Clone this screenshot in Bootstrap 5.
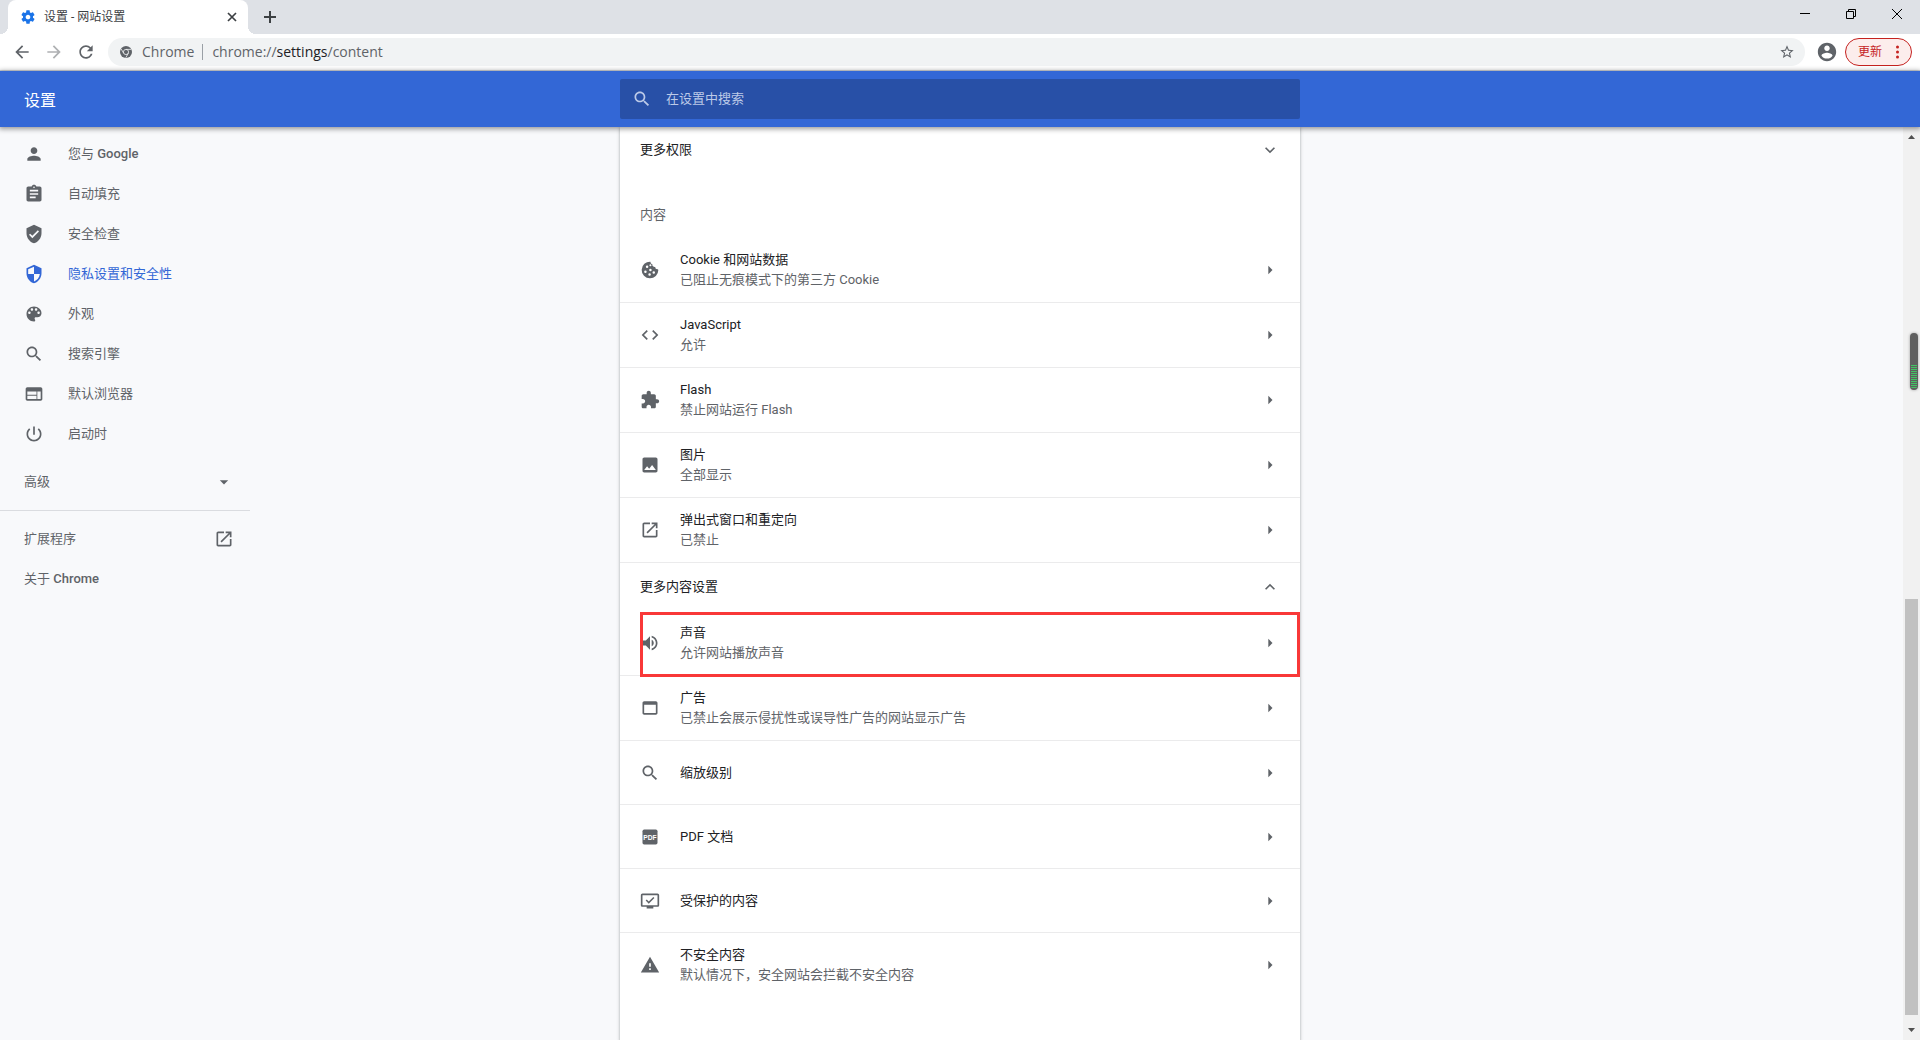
<!DOCTYPE html>
<html lang="zh-CN">
<head>
<meta charset="utf-8">
<meta name="viewport" content="width=device-width, initial-scale=1">
<title>设置 - 网站设置</title>
<link href="https://cdn.jsdelivr.net/npm/bootstrap@5.3.0/dist/css/bootstrap.min.css" rel="stylesheet">
<style>
body { font: 13px/20px Roboto, "Noto Sans CJK SC", sans-serif; color: #202124; background: #f8f9fb; }
button { background: none; border: 0; padding: 0; color: inherit; }
svg { display: block; fill: currentColor; flex: none; }
a { color: inherit; text-decoration: none; }
.ico { width: 20px; height: 20px; }
.ico-sm { width: 12px; height: 12px; }
.tint { color: #5f6368; }
/* browser frame */
.tabstrip { background: #dee1e6; height: 34px; padding-left: 8px; }
.tab-item { position: relative; width: 240px; height: 34px; padding: 0 10px 0 12px; background: #fff; border-radius: 8px 8px 0 0; font-size: 12px; color: #3c4043; }
.tab-item::before, .tab-item::after { content: ""; position: absolute; bottom: 0; width: 8px; height: 8px; }
.tab-item::before { right: 100%; background: radial-gradient(circle at 0 0, transparent 8px, #fff 8px); }
.tab-item::after { left: 100%; background: radial-gradient(circle at 100% 0, transparent 8px, #fff 8px); }
.win-btn { width: 46px; height: 28px; color: #000; }
.toolbar { height: 37px; padding: 0 8px 0 12px; background: #fff; border-bottom: 1px solid #d5d8dc; color: #5f6368; }
.nav-btns { gap: 12px; margin-right: 12px; }
.omnibox { height: 28px; background: #f1f3f4; padding: 0 10px 0 12px; font: 14px/20px "Open Sans", "Noto Sans", sans-serif; color: #5f6368; }
.origin { padding: 0 8px 0 10px; }
.omnibox .sep { width: 1px; height: 16px; background: #9aa0a6; }
.url { padding-left: 9px; }
.url b { font-weight: 400; color: #202124; }
.user-btn { margin: 0 7px 0 11px; }
.update { width: 67px; height: 28px; border: 1px solid #c5221f; background: #fcedec; color: #c5221f; font-size: 12px; padding: 0 12px; }
/* settings header */
.appbar { height: 56px; background: #3367d6; color: #fff; box-shadow: 0 1px 5px 1px rgba(0,0,0,.4); position: relative; z-index: 2; }
.side { flex: 1 1 0; }
.appbar h1 { font-size: 16px; line-height: 20px; font-weight: 400; }
.searchbox { flex: 0 1 680px; height: 40px; background: #2850a7; border-radius: 2px; padding: 0 12px; gap: 14px; color: #bccae8; }
.searchbox input { background: none; border: 0; outline: 0; color: #fff; padding: 0; }
.searchbox input::placeholder { color: #bccae8; opacity: 1; }
/* body */
.sidenav { width: 250px; padding-top: 7px; color: #5f6368; }
.sidenav a, .sidenav button { height: 40px; padding: 0 16px 0 24px; }
.sidenav b { font-weight: 500; }
.sidenav a.active { color: #3367d6; }
.sidenav hr { margin: 8px 0; border-color: #dadce0; opacity: 1; }
.panel { flex: 0 1 680px; background: #fff; box-shadow: 0 1px 2px 0 rgba(60,64,67,.3), 0 1px 3px 1px rgba(60,64,67,.15); z-index: 1; }
.fold { height: 48px; padding: 0 20px; }
.fold.first { height: 45px; }
.panel h2 { font-size: 13px; line-height: 20px; font-weight: 400; margin: 0; padding: 33px 20px 13px; color: #5f6368; }
.setting { position: relative; min-height: 64px; padding: 11px 20px; gap: 20px; border-bottom: 1px solid #ebebec; }
.setting:last-child { border: 0; }
.setting.two { min-height: 65px; }
.highlight { position: absolute; left: 20px; right: 0; top: 1px; bottom: -2px; border: 3px solid #f93838; z-index: 1; }
/* scrollbar */
.scroll { width: 17px; background: #f1f1f1; color: #505050; padding: 5px 2px; }
.thumb { width: 13px; background: #c1c1c1; }
.gauge { position: absolute; right: 2px; top: 206px; width: 8px; height: 57px; border-radius: 4px; padding: 32px 1px 1px; background: #5f5f5f; box-shadow: 0 0 3px rgba(0,0,0,.35); z-index: 3; }
.gauge div { height: 100%; border-radius: 0 0 3px 3px; background: repeating-linear-gradient(#42c463 0 1px, #5f5f5f 1px 2px); }
</style>
<script src="https://cdn.jsdelivr.net/npm/bootstrap@5.3.0/dist/js/bootstrap.bundle.min.js"></script>
</head>
<body class="d-flex flex-column vh-100 overflow-hidden">
<svg class="d-none">
  <symbol id="gear" viewBox="0 0 24 24"><path d="M19.43 12.98c.04-.32.07-.64.07-.98s-.03-.66-.07-.98l2.11-1.65c.19-.15.24-.42.12-.64l-2-3.46c-.12-.22-.39-.3-.61-.22l-2.49 1c-.52-.4-1.08-.73-1.69-.98l-.38-2.65C14.46 2.18 14.25 2 14 2h-4c-.25 0-.46.18-.49.42l-.38 2.65c-.61.25-1.17.59-1.69.98l-2.49-1c-.23-.09-.49 0-.61.22l-2 3.46c-.13.22-.07.49.12.64l2.11 1.65c-.04.32-.07.65-.07.98s.03.66.07.98l-2.11 1.65c-.19.15-.24.42-.12.64l2 3.46c.12.22.39.3.61.22l2.49-1c.52.4 1.08.73 1.69.98l.38 2.65c.03.24.24.42.49.42h4c.25 0 .46-.18.49-.42l.38-2.65c.61-.25 1.17-.59 1.69-.98l2.49 1c.23.09.49 0 .61-.22l2-3.46c.12-.22.07-.49-.12-.64l-2.11-1.65zM12 15.5c-1.93 0-3.5-1.57-3.5-3.5s1.57-3.5 3.5-3.5 3.5 1.57 3.5 3.5-1.57 3.5-3.5 3.5z"/></symbol>
  <symbol id="back" viewBox="0 0 24 24"><path d="M20 11H7.83l5.59-5.59L12 4l-8 8 8 8 1.41-1.41L7.83 13H20v-2z"/></symbol>
  <symbol id="forward" viewBox="0 0 24 24"><path d="M12 4l-1.41 1.41L16.17 11H4v2h12.17l-5.58 5.59L12 20l8-8z"/></symbol>
  <symbol id="reload" viewBox="0 0 24 24"><path d="M17.65 6.35C16.2 4.9 14.21 4 12 4c-4.42 0-7.99 3.58-7.99 8s3.57 8 7.99 8c3.73 0 6.84-2.55 7.73-6h-2.08c-.82 2.33-3.04 4-5.65 4-3.31 0-6-2.69-6-6s2.69-6 6-6c1.66 0 3.14.69 4.22 1.78L13 11h7V4l-2.35 2.35z"/></symbol>
  <symbol id="star" viewBox="0 0 24 24"><path d="M22 9.24l-7.19-.62L12 2 9.19 8.63 2 9.24l5.46 4.73L5.82 21 12 17.27 18.18 21l-1.63-7.03L22 9.24zM12 15.4l-3.76 2.27 1-4.28-3.32-2.88 4.38-.38L12 6.1l1.71 4.04 4.38.38-3.32 2.88 1 4.28L12 15.4z"/></symbol>
  <symbol id="account" viewBox="0 0 24 24"><path d="M12 2C6.48 2 2 6.48 2 12s4.48 10 10 10 10-4.48 10-10S17.52 2 12 2zm0 3c1.66 0 3 1.34 3 3s-1.34 3-3 3-3-1.34-3-3 1.34-3 3-3zm0 14.2c-2.5 0-4.71-1.28-6-3.22.03-1.99 4-3.08 6-3.08 1.99 0 5.97 1.09 6 3.08-1.29 1.94-3.5 3.22-6 3.22z"/></symbol>
  <symbol id="search" viewBox="0 0 24 24"><path d="M15.5 14h-.79l-.28-.27C15.41 12.59 16 11.11 16 9.5 16 5.91 13.09 3 9.5 3S3 5.91 3 9.5 5.91 16 9.5 16c1.61 0 3.09-.59 4.23-1.57l.27.28v.79l5 4.99L20.49 19l-4.99-5zm-6 0C7.01 14 5 11.99 5 9.5S7.01 5 9.5 5 14 7.01 14 9.5 11.99 14 9.5 14z"/></symbol>
  <symbol id="person" viewBox="0 0 24 24"><path d="M12 12c2.21 0 4-1.79 4-4s-1.79-4-4-4-4 1.79-4 4 1.79 4 4 4zm0 2c-2.67 0-8 1.34-8 4v2h16v-2c0-2.66-5.33-4-8-4z"/></symbol>
  <symbol id="assignment" viewBox="0 0 24 24"><path d="M19 3h-4.18C14.4 1.84 13.3 1 12 1c-1.3 0-2.4.84-2.82 2H5c-1.1 0-2 .9-2 2v14c0 1.1.9 2 2 2h14c1.1 0 2-.9 2-2V5c0-1.1-.9-2-2-2zm-7 0c.55 0 1 .45 1 1s-.45 1-1 1-1-.45-1-1 .45-1 1-1zm2 14H7v-2h7v2zm3-4H7v-2h10v2zm0-4H7V7h10v2z"/></symbol>
  <symbol id="verified" viewBox="0 0 24 24"><path d="M12 1L3 5v6c0 5.55 3.84 10.74 9 12 5.16-1.26 9-6.45 9-12V5l-9-4zm-2 16l-4-4 1.41-1.41L10 14.17l6.59-6.59L18 9l-8 8z"/></symbol>
  <symbol id="shield" viewBox="0 0 24 24"><path d="M12 1L3 5v6c0 5.55 3.84 10.74 9 12 5.16-1.26 9-6.45 9-12V5l-9-4zm0 10.99h7c-.53 4.12-3.28 7.79-7 8.94V12H5V6.3l7-3.11v8.8z"/></symbol>
  <symbol id="palette" viewBox="0 0 24 24"><path d="M12 3c-4.97 0-9 4.03-9 9s4.03 9 9 9c.83 0 1.5-.67 1.5-1.5 0-.39-.15-.74-.39-1.01-.23-.26-.38-.61-.38-.99 0-.83.67-1.5 1.5-1.5H16c2.76 0 5-2.24 5-5 0-4.42-4.03-8-9-8zm-5.5 9c-.83 0-1.5-.67-1.5-1.5S5.67 9 6.5 9 8 9.67 8 10.500 7.33 12 6.5 12zm3-4C8.67 8 8 7.33 8 6.5S8.67 5 9.500 5s1.500.67 1.500 1.500S10.330 8 9.500 8zm5 0c-.83 0-1.500-.67-1.500-1.500S13.670 5 14.500 5s1.500.67 1.500 1.500S15.330 8 14.500 8zm3 4c-.83 0-1.500-.67-1.500-1.500S16.670 9 17.500 9s1.500.67 1.500 1.500-.67 1.500-1.500 1.500z"/></symbol>
  <symbol id="web" viewBox="0 0 24 24"><path d="M20 4H4c-1.100 0-2 .9-2 2v12c0 1.100.9 2 2 2h16c1.100 0 2-.9 2-2V6c0-1.100-.9-2-2-2zm-5 14H4v-4h11v4zm0-5H4V9h11v4zm5 5h-4V9h4v9z"/></symbol>
  <symbol id="power" viewBox="0 0 24 24"><path d="M13 3h-2v10h2V3zm4.830 2.170l-1.420 1.420C17.990 7.860 19 9.810 19 12c0 3.870-3.130 7-7 7s-7-3.130-7-7c0-2.190 1.010-4.140 2.580-5.420L6.170 5.170C4.230 6.820 3 9.260 3 12c0 4.970 4.030 9 9 9s9-4.030 9-9c0-2.740-1.230-5.180-3.170-6.830z"/></symbol>
  <symbol id="open" viewBox="0 0 24 24"><path d="M19 19H5V5h7V3H5c-1.110 0-2 .9-2 2v14c0 1.100.89 2 2 2h14c1.100 0 2-.9 2-2v-7h-2v7zM14 3v2h3.590l-9.830 9.830 1.410 1.410L19 6.410V10h2V3h-7z"/></symbol>
  <symbol id="cookie" viewBox="0 0 24 24"><path fill-rule="evenodd" d="M21.500 11a2.800 2.800 0 0 1-3.300-2.600A3 3 0 0 1 14.800 5 2.900 2.900 0 0 1 12.500 2 10 10 0 1 0 22 12zM8.500 6.500a1.500 1.500 0 1 1 0 3 1.500 1.500 0 0 1 0-3zm-2 6a1.500 1.500 0 1 1 0 3 1.500 1.500 0 0 1 0-3zm6-2a1.500 1.500 0 1 1 0 3 1.500 1.500 0 0 1 0-3zm-1 5.500a1.500 1.500 0 1 1 0 3 1.500 1.500 0 0 1 0-3zm5-2.500a1.500 1.500 0 1 1 0 3 1.500 1.500 0 0 1 0-3zM12.500 5a1.200 1.200 0 1 1 0 2.400 1.200 1.200 0 0 1 0-2.400z"/></symbol>
  <symbol id="code" viewBox="0 0 24 24"><path d="M9.400 16.600L4.800 12l4.600-4.600L8 6l-6 6 6 6 1.400-1.400zm5.200 0l4.600-4.600-4.600-4.600L16 6l6 6-6 6-1.400-1.400z"/></symbol>
  <symbol id="extension" viewBox="0 0 24 24"><path d="M20.500 11H19V7c0-1.100-.9-2-2-2h-4V3.500C13 2.120 11.880 1 10.500 1S8 2.120 8 3.500V5H4c-1.100 0-1.990.9-1.990 2v3.800H3.500c1.490 0 2.700 1.210 2.700 2.700s-1.210 2.700-2.700 2.700H2V20c0 1.100.9 2 2 2h3.800v-1.500c0-1.490 1.210-2.700 2.700-2.700 1.490 0 2.700 1.210 2.700 2.700V22H17c1.100 0 2-.9 2-2v-4h1.500c1.380 0 2.500-1.120 2.500-2.500S21.880 11 20.500 11z"/></symbol>
  <symbol id="photo" viewBox="0 0 24 24"><path d="M21 19V5c0-1.100-.9-2-2-2H5c-1.100 0-2 .9-2 2v14c0 1.100.9 2 2 2h14c1.100 0 2-.9 2-2zM8.500 13.500l2.500 3.010L14.500 12l4.500 6H5l3.500-4.500z"/></symbol>
  <symbol id="volume" viewBox="0 0 24 24"><path d="M3 9v6h4l5 5V4L7 9H3zm13.500 3c0-1.770-1.020-3.290-2.500-4.030v8.050c1.480-.73 2.500-2.250 2.500-4.020zM14 3.230v2.060c2.890.86 5 3.540 5 6.710s-2.110 5.850-5 6.710v2.060c4.010-.91 7-4.490 7-8.770s-2.990-7.860-7-8.770z"/></symbol>
  <symbol id="window" viewBox="0 0 24 24"><path d="M19 4H5c-1.110 0-2 .9-2 2v12c0 1.100.89 2 2 2h14c1.100 0 2-.9 2-2V6c0-1.100-.89-2-2-2zm0 14H5V8h14v10z"/></symbol>
  <symbol id="pdf" viewBox="0 0 24 24"><rect x="3" y="3" width="18" height="18" rx="2"/><text x="12" y="15" text-anchor="middle" font-family="Liberation Sans, sans-serif" font-weight="700" font-size="8" fill="#fff">PDF</text></symbol>
  <symbol id="protected" viewBox="0 0 24 24"><path d="M21 3H3c-1.100 0-2 .9-2 2v12c0 1.100.9 2 2 2h5v2h8v-2h5c1.100 0 2-.9 2-2V5c0-1.100-.9-2-2-2zm0 14H3V5h18v12zM10.500 15.200l-3.700-3.700 1.300-1.300 2.400 2.400 5.500-5.500 1.300 1.300z"/></symbol>
  <symbol id="warning" viewBox="0 0 24 24"><path d="M1 21h22L12 2 1 21zm12-3h-2v-2h2v2zm0-4h-2v-4h2v4z"/></symbol>
  <symbol id="right" viewBox="0 0 24 24"><path d="M10 7l5 5-5 5z"/></symbol>
  <symbol id="drop" viewBox="0 0 24 24"><path d="M7 10l5 5 5-5z"/></symbol>
  <symbol id="more" viewBox="0 0 24 24"><path d="M16.590 8.590L12 13.170 7.410 8.590 6 10l6 6 6-6z"/></symbol>
  <symbol id="less" viewBox="0 0 24 24"><path d="M12 8l-6 6 1.410 1.410L12 10.830l4.590 4.580L18 14z"/></symbol>
</svg>

<div class="tabstrip d-flex">
  <div class="tab-item d-flex align-items-center">
    <svg width="16" height="16" color="#1a73e8"><use href="#gear"/></svg>
    <span class="ms-2 me-auto text-nowrap">设置 - 网站设置</span>
    <button aria-label="关闭标签页"><svg class="ico-sm" viewBox="0 0 12 12"><path d="M2 2l8 8M10 2l-8 8" stroke="#3c4043" stroke-width="1.700"/></svg></button>
  </div>
  <button class="ms-3" aria-label="新标签页"><svg width="12" height="12" viewBox="0 0 12 12"><path d="M6 0v12M0 6h12" stroke="#3c4043" stroke-width="2"/></svg></button>
  <div class="ms-auto d-flex">
    <button class="win-btn d-flex align-items-center justify-content-center" aria-label="最小化"><svg width="10" height="10"><path d="M0 4h10v1H0z"/></svg></button>
    <button class="win-btn d-flex align-items-center justify-content-center" aria-label="还原"><svg width="10" height="10"><path d="M.5 2.500h7v7h-7zM2.500 2.500v-2h7v7h-2" fill="none" stroke="#000"/></svg></button>
    <button class="win-btn d-flex align-items-center justify-content-center" aria-label="关闭"><svg width="10" height="10"><path d="M0 0l10 10M10 0L0 10" stroke="#000"/></svg></button>
  </div>
</div>

<div class="toolbar d-flex align-items-center">
  <div class="nav-btns d-flex">
    <button aria-label="后退"><svg class="ico"><use href="#back"/></svg></button>
    <button class="opacity-50" aria-label="前进" disabled><svg class="ico"><use href="#forward"/></svg></button>
    <button aria-label="重新加载"><svg class="ico"><use href="#reload"/></svg></button>
  </div>
  <div class="omnibox flex-fill d-flex align-items-center rounded-pill">
    <svg class="ico-sm" viewBox="0 0 12 12"><circle cx="6" cy="6" r="6"/><circle cx="6" cy="6" r="2.600" fill="none" stroke="#f1f3f4" stroke-width=".8"/><path d="M6 3.400h5.200M3.700 7.300L1.200 3M8.300 7.300L5.800 11.700" stroke="#f1f3f4" stroke-width=".8"/></svg>
    <span class="origin">Chrome</span>
    <span class="sep"></span>
    <span class="url me-auto">chrome://<b>settings</b>/content</span>
    <button aria-label="收藏"><svg width="16" height="16"><use href="#star"/></svg></button>
  </div>
  <button class="user-btn" aria-label="用户"><svg width="22" height="22"><use href="#account"/></svg></button>
  <button class="update rounded-pill d-flex align-items-center justify-content-between">更新<svg width="3" height="14" viewBox="0 0 3 14"><circle cx="1.500" cy="2" r="1.500"/><circle cx="1.500" cy="7" r="1.500"/><circle cx="1.500" cy="12" r="1.500"/></svg></button>
</div>

<header class="appbar d-flex align-items-center">
  <div class="side"><h1 class="m-0 ps-4 pt-1">设置</h1></div>
  <label class="searchbox d-flex align-items-center"><svg class="ico"><use href="#search"/></svg><input class="flex-fill" type="search" placeholder="在设置中搜索" aria-label="在设置中搜索"></label>
  <div class="side"></div>
</header>

<div class="d-flex flex-fill position-relative overflow-hidden">
  <div class="side">
    <nav class="sidenav">
      <a href="#" class="d-flex align-items-center gap-4"><svg class="ico"><use href="#person"/></svg><span>您与 <b>Google</b></span></a>
      <a href="#" class="d-flex align-items-center gap-4"><svg class="ico"><use href="#assignment"/></svg>自动填充</a>
      <a href="#" class="d-flex align-items-center gap-4"><svg class="ico"><use href="#verified"/></svg>安全检查</a>
      <a href="#" class="d-flex align-items-center gap-4 active"><svg class="ico"><use href="#shield"/></svg>隐私设置和安全性</a>
      <a href="#" class="d-flex align-items-center gap-4"><svg class="ico"><use href="#palette"/></svg>外观</a>
      <a href="#" class="d-flex align-items-center gap-4"><svg class="ico"><use href="#search"/></svg>搜索引擎</a>
      <a href="#" class="d-flex align-items-center gap-4"><svg class="ico"><use href="#web"/></svg>默认浏览器</a>
      <a href="#" class="d-flex align-items-center gap-4"><svg class="ico"><use href="#power"/></svg>启动时</a>
      <button class="mt-2 w-100 d-flex align-items-center justify-content-between">高级<svg class="ico"><use href="#drop"/></svg></button>
      <hr>
      <a href="#" class="d-flex align-items-center justify-content-between">扩展程序<svg class="ico"><use href="#open"/></svg></a>
      <a href="#" class="d-flex align-items-center"><span>关于 <b>Chrome</b></span></a>
    </nav>
  </div>
  <main class="panel">
    <button class="fold first w-100 d-flex align-items-center justify-content-between">更多权限<svg class="ico tint"><use href="#more"/></svg></button>
    <h2>内容</h2>
    <a href="#" class="setting two d-flex align-items-center"><svg class="ico tint"><use href="#cookie"/></svg><div class="flex-fill"><div>Cookie 和网站数据</div><div class="tint">已阻止无痕模式下的第三方 Cookie</div></div><svg class="ico tint"><use href="#right"/></svg></a>
    <a href="#" class="setting two d-flex align-items-center"><svg class="ico tint"><use href="#code"/></svg><div class="flex-fill"><div>JavaScript</div><div class="tint">允许</div></div><svg class="ico tint"><use href="#right"/></svg></a>
    <a href="#" class="setting two d-flex align-items-center"><svg class="ico tint"><use href="#extension"/></svg><div class="flex-fill"><div>Flash</div><div class="tint">禁止网站运行 Flash</div></div><svg class="ico tint"><use href="#right"/></svg></a>
    <a href="#" class="setting two d-flex align-items-center"><svg class="ico tint"><use href="#photo"/></svg><div class="flex-fill"><div>图片</div><div class="tint">全部显示</div></div><svg class="ico tint"><use href="#right"/></svg></a>
    <a href="#" class="setting two d-flex align-items-center"><svg class="ico tint"><use href="#open"/></svg><div class="flex-fill"><div>弹出式窗口和重定向</div><div class="tint">已禁止</div></div><svg class="ico tint"><use href="#right"/></svg></a>
    <button class="fold w-100 d-flex align-items-center justify-content-between">更多内容设置<svg class="ico tint"><use href="#less"/></svg></button>
    <a href="#" class="setting two d-flex align-items-center"><svg class="ico tint"><use href="#volume"/></svg><div class="flex-fill"><div>声音</div><div class="tint">允许网站播放声音</div></div><svg class="ico tint"><use href="#right"/></svg><span class="highlight"></span></a>
    <a href="#" class="setting two d-flex align-items-center"><svg class="ico tint"><use href="#window"/></svg><div class="flex-fill"><div>广告</div><div class="tint">已禁止会展示侵扰性或误导性广告的网站显示广告</div></div><svg class="ico tint"><use href="#right"/></svg></a>
    <a href="#" class="setting d-flex align-items-center"><svg class="ico tint"><use href="#search"/></svg><div class="flex-fill">缩放级别</div><svg class="ico tint"><use href="#right"/></svg></a>
    <a href="#" class="setting d-flex align-items-center"><svg class="ico tint"><use href="#pdf"/></svg><div class="flex-fill">PDF 文档</div><svg class="ico tint"><use href="#right"/></svg></a>
    <a href="#" class="setting d-flex align-items-center"><svg class="ico tint"><use href="#protected"/></svg><div class="flex-fill">受保护的内容</div><svg class="ico tint"><use href="#right"/></svg></a>
    <a href="#" class="setting d-flex align-items-center"><svg class="ico tint"><use href="#warning"/></svg><div class="flex-fill"><div>不安全内容</div><div class="tint">默认情况下，安全网站会拦截不安全内容</div></div><svg class="ico tint"><use href="#right"/></svg></a>
  </main>
  <div class="side d-flex justify-content-end">
    <div class="scroll d-flex flex-column align-items-center">
      <svg width="7" height="8" viewBox="0 0 7 8"><path d="M0 7h7L3.500 3z"/></svg>
      <div style="flex: 459 0 0"></div>
      <div class="thumb" style="flex: 416 0 0"></div>
      <div style="flex: 12 0 0"></div>
      <svg width="7" height="8" viewBox="0 0 7 8"><path d="M0 1h7L3.500 5z"/></svg>
    </div>
    <div class="gauge"><div></div></div>
  </div>
</div>
</body>
</html>
